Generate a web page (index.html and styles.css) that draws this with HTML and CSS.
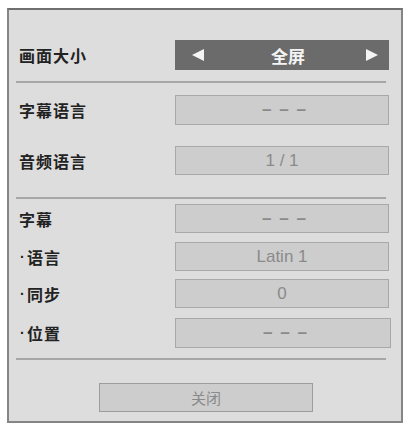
FILE: index.html
```html
<!DOCTYPE html>
<html lang="zh">
<head>
<meta charset="utf-8">
<link rel="stylesheet" href="styles.css">
</head>
<body>
<div class="panel">
  <div class="row row-size">
    <div class="label">画面大小</div>
    <div class="bar">
      <span class="tri tri-left"></span>
      <span class="bar-text">全屏</span>
      <span class="tri tri-right"></span>
    </div>
  </div>
  <div class="sep sep1"></div>
  <div class="row row-sub">
    <div class="label">字幕语言</div>
    <div class="box dashes">– – –</div>
  </div>
  <div class="row row-audio">
    <div class="label">音频语言</div>
    <div class="box">1 / 1</div>
  </div>
  <div class="sep sep2"></div>
  <div class="row row-s1">
    <div class="label">字幕</div>
    <div class="box dashes">– – –</div>
  </div>
  <div class="row row-s2">
    <div class="label"><span class="dot">·</span><span>语言</span></div>
    <div class="box">Latin 1</div>
  </div>
  <div class="row row-s3">
    <div class="label"><span class="dot">·</span><span>同步</span></div>
    <div class="box">0</div>
  </div>
  <div class="row row-s4">
    <div class="label"><span class="dot">·</span><span>位置</span></div>
    <div class="box box-wide dashes">– – –</div>
  </div>
  <div class="sep sep3"></div>
  <div class="btn-row">
    <div class="btn">关闭</div>
  </div>
</div>
</body>
</html>
```
FILE: styles.css
```css
html, body {
  margin: 0;
  padding: 0;
  background: #ffffff;
}
body {
  width: 409px;
  height: 426px;
  overflow: hidden;
  font-family: "Liberation Sans", "Noto Sans CJK SC", sans-serif;
}
.panel {
  box-sizing: border-box;
  margin: 8px 0 0 7px;
  width: 396px;
  height: 415px;
  background: #dddddd;
  border: 2px solid #858585;
  border-top-color: #6f6f6f;
  display: flex;
  flex-direction: column;
}
.row {
  display: flex;
  align-items: center;
  padding-left: 10px;
}
.label {
  width: 156px;
  display: flex;
  align-items: center;
  font-family: "Noto Sans CJK SC", sans-serif;
  font-weight: 700;
  font-size: 16px;
  letter-spacing: 1px;
  color: #222222;
  line-height: 20px;
}
.dot {
  display: inline-block;
  width: 7px;
  margin-left: 1px;
  font-family: "Liberation Sans", sans-serif;
  font-weight: 700;
  font-size: 14px;
  letter-spacing: 0;
}
.bar {
  box-sizing: border-box;
  width: 214px;
  height: 30px;
  background: #6b6b6b;
  display: flex;
  align-items: center;
  justify-content: space-between;
  padding: 0 11px 0 17px;
}
.bar-text {
  font-family: "Noto Sans CJK SC", sans-serif;
  font-weight: 700;
  font-size: 17px;
  color: #f4f4f4;
  margin-left: 6px;
}
.tri {
  width: 0;
  height: 0;
  border-top: 6px solid transparent;
  border-bottom: 6px solid transparent;
}
.tri-left {
  border-right: 12px solid #f4f4f4;
}
.tri-right {
  border-left: 12px solid #f4f4f4;
}
.box {
  box-sizing: border-box;
  width: 214px;
  height: 29px;
  background: #cdcdcd;
  border: 1.5px solid #a8a8a8;
  color: #8a8a8a;
  font-size: 17px;
  display: flex;
  align-items: center;
  justify-content: center;
}
.dashes {
  word-spacing: 3px;
  font-weight: 700;
  padding-left: 4px;
}
.box-wide {
  width: 216px;
  height: 30px;
}
.sep {
  height: 2px;
  background: #a7a7a7;
  margin-left: 7px;
  margin-right: 15px;
}
.row-size { margin-top: 30px; height: 30px; }
.sep1 { margin-top: 11px; }
.row-sub { margin-top: 12px; height: 30px; }
.row-sub .box { height: 30px; }
.row-audio { margin-top: 21px; }
.sep2 { margin-top: 22px; }
.row-s1 { margin-top: 5px; }
.row-s2 { margin-top: 9px; }
.row-s3 { margin-top: 8px; }
.row-s4 { margin-top: 10px; }
.sep3 { margin-top: 10px; }
.btn-row {
  margin-top: 23px;
  padding-left: 90px;
  display: flex;
}
.btn {
  box-sizing: border-box;
  width: 214px;
  height: 29px;
  background: #cdcdcd;
  border: 1.5px solid #9d9d9d;
  color: #8a8a8a;
  font-family: "Noto Sans CJK SC", sans-serif;
  font-size: 15px;
  display: flex;
  align-items: center;
  justify-content: center;
}
```
